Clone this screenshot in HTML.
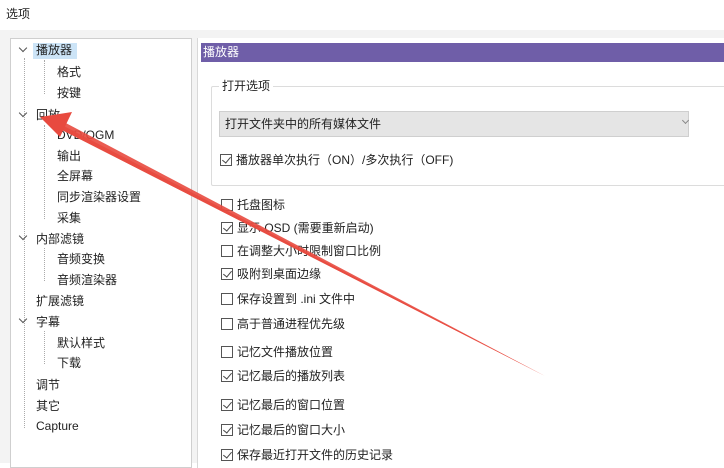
<!DOCTYPE html>
<html><head><meta charset="utf-8"><style>
*{margin:0;padding:0;box-sizing:border-box}
body{width:724px;height:463px;overflow:hidden;background:#fff;font-family:"Liberation Sans","Noto Sans CJK SC",sans-serif;font-size:12px;color:#222;position:relative}
.a{position:absolute;white-space:nowrap;line-height:14px}
.cb{position:absolute;width:12px;height:12px;border:1px solid #555;background:#fff}
.cb.c::after{content:"";position:absolute;left:3px;top:0px;width:4px;height:7px;border:solid #444;border-width:0 1.5px 1.5px 0;transform:rotate(40deg)}
.chev{position:absolute;width:6px;height:6px;border:solid #555;border-width:0 1.5px 1.5px 0;transform:rotate(45deg)}
.dot{position:absolute;border-left:1px dotted #aaa}
.doth{position:absolute;border-top:1px dotted #aaa;width:6px}
</style></head><body>
<div style="position:absolute;left:0;top:30px;width:724px;height:433px;background:#f3f3f3"></div>
<div class="a" style="left:6px;top:7px">选项</div>
<div style="position:absolute;left:10px;top:38px;width:182px;height:430px;background:#fff;border:1px solid #cfcfcf"></div>
<div style="position:absolute;left:197px;top:38px;width:530px;height:430px;background:#fff;border-left:1px solid #d8d8d8"></div>
<div style="position:absolute;left:201px;top:43px;width:523px;height:19px;background:#6f5ea8"></div>
<div class="a" style="left:203px;top:45px;color:#fff">播放器</div>

<!-- tree -->
<div style="position:absolute;left:33px;top:43px;width:44px;height:16px;background:#cce4f7"></div>
<div class="dot" style="left:24px;top:58px;height:370px"></div>
<div class="dot" style="left:44px;top:60px;height:34px"></div>
<div class="dot" style="left:44px;top:125px;height:94px"></div>
<div class="dot" style="left:44px;top:248px;height:33px"></div>
<div class="dot" style="left:44px;top:331px;height:33px"></div>
<div class="chev" style="left:20px;top:45px"></div>
<div class="chev" style="left:20px;top:110px"></div>
<div class="chev" style="left:20px;top:233px"></div>
<div class="chev" style="left:20px;top:316px"></div>
<div class="a" style="left:36px;top:43px">播放器</div>
<div class="a" style="left:57px;top:65px">格式</div>
<div class="a" style="left:57px;top:86px">按键</div>
<div class="a" style="left:36px;top:108px">回放</div>
<div class="a" style="left:57px;top:128px">DVD/OGM</div>
<div class="a" style="left:57px;top:149px">输出</div>
<div class="a" style="left:57px;top:169px">全屏幕</div>
<div class="a" style="left:57px;top:190px">同步渲染器设置</div>
<div class="a" style="left:57px;top:211px">采集</div>
<div class="a" style="left:36px;top:232px">内部滤镜</div>
<div class="a" style="left:57px;top:252px">音频变换</div>
<div class="a" style="left:57px;top:273px">音频渲染器</div>
<div class="a" style="left:36px;top:294px">扩展滤镜</div>
<div class="a" style="left:36px;top:315px">字幕</div>
<div class="a" style="left:57px;top:336px">默认样式</div>
<div class="a" style="left:57px;top:356px">下载</div>
<div class="a" style="left:36px;top:378px">调节</div>
<div class="a" style="left:36px;top:399px">其它</div>
<div class="a" style="left:36px;top:419px">Capture</div>

<!-- group -->
<div style="position:absolute;left:211px;top:86px;width:520px;height:100px;border:1px solid #dcdcdc;border-radius:2px"></div>
<div class="a" style="left:219px;top:79px;background:#fff;padding:0 3px">打开选项</div>
<div style="position:absolute;left:219px;top:111px;width:470px;height:26px;background:#e5e5e5;border:1px solid #cfcfcf"></div>
<div class="a" style="left:225px;top:117px">打开文件夹中的所有媒体文件</div>
<div class="chev" style="left:683px;top:118px;width:5px;height:5px;border-color:#888;border-width:0 1px 1px 0"></div>
<div class="cb c" style="left:220px;top:154px"></div>
<div class="a" style="left:236px;top:153px">播放器单次执行（ON）/多次执行（OFF)</div>

<div class="cb" style="left:221px;top:199px"></div><div class="a" style="left:237px;top:198px">托盘图标</div>
<div class="cb c" style="left:221px;top:222px"></div><div class="a" style="left:237px;top:221px">显示 OSD (需要重新启动)</div>
<div class="cb" style="left:221px;top:245px"></div><div class="a" style="left:237px;top:244px">在调整大小时限制窗口比例</div>
<div class="cb c" style="left:221px;top:268px"></div><div class="a" style="left:237px;top:267px">吸附到桌面边缘</div>
<div class="cb" style="left:221px;top:293px"></div><div class="a" style="left:237px;top:292px">保存设置到 .ini 文件中</div>
<div class="cb" style="left:221px;top:318px"></div><div class="a" style="left:237px;top:317px">高于普通进程优先级</div>
<div class="cb" style="left:221px;top:346px"></div><div class="a" style="left:237px;top:345px">记忆文件播放位置</div>
<div class="cb c" style="left:221px;top:370px"></div><div class="a" style="left:237px;top:369px">记忆最后的播放列表</div>
<div class="cb c" style="left:221px;top:399px"></div><div class="a" style="left:237px;top:398px">记忆最后的窗口位置</div>
<div class="cb c" style="left:221px;top:424px"></div><div class="a" style="left:237px;top:423px">记忆最后的窗口大小</div>
<div class="cb c" style="left:221px;top:449px"></div><div class="a" style="left:237px;top:448px">保存最近打开文件的历史记录</div>

<svg style="position:absolute;left:0;top:0" width="724" height="463">
<polygon points="545,376 58,128 60,124" fill="#e84a3f" opacity="0.9"/>
<polygon points="58,128 62,121 545,376" fill="#e84a3f" opacity="0.9"/>
<polygon points="40,117 72,112 60,137" fill="#e84a3f"/>
</svg>
</body></html>
